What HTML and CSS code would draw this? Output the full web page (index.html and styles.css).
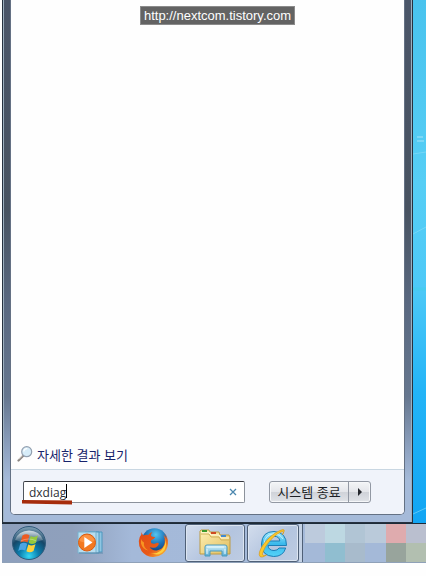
FILE: index.html
```html
<!DOCTYPE html>
<html lang="ko">

<head>
    <meta charset="UTF-8">
    <meta name="viewport" content="width=device-width, initial-scale=1.0">
    <title>시작 메뉴</title>
    <link rel="stylesheet" href="styles.css">
</head>

<body>
    <div class="screen">
        <div class="desktop">
            <div class="startMenu">
                <div class="menuPanel">
                    <div class="results">
                        <span class="siteLabel">http://nextcom.tistory.com</span>
                        <a class="moreResults" href="#">
                            <svg class="moreIcon" viewBox="0 0 16 16">
                                <path d="M6 10 1.5 14.5" stroke="#8a8581" stroke-width="2.2" stroke-linecap="round" />
                                <path d="M5.6 9.6 1.8 13.4" stroke="#d5cfc7" stroke-width="1" />
                                <circle cx="9.700" cy="5.700" r="5" fill="#d7edf9" stroke="#93a0b0" stroke-width="1.2" />
                                <path d="M6.8 5.5a3 3 0 0 1 3.5-2.8" fill="none" stroke="#fff" stroke-width="1.3" />
                            </svg>
                            자세한 결과 보기
                        </a>
                    </div>
                    <div class="menuFooter">
                        <div class="searchBox">
                            <input id="searchInput" class="searchInput" type="text" value="dxdiag" aria-label="검색">
                            <span class="caret"></span>
                            <button class="clearButton" aria-label="지우기">
                                <svg viewBox="0 0 8 8">
                                    <path d="M1 1 7 7M7 1 1 7" stroke="#4b87ae" stroke-width="1.3" />
                                </svg>
                            </button>
                            <svg class="underline" viewBox="0 0 52 6">
                                <path d="M1 1 51 1.500V5.500L1 4.500Z" fill="#a62c0c" />
                            </svg>
                        </div>
                        <div class="shutdown">
                            <button class="shutdownButton">시스템 종료</button>
                            <button class="shutdownArrow" aria-label="종료 옵션">
                                <svg viewBox="0 0 6 8">
                                    <path d="M1 0 5 4 1 8Z" fill="#24272d" />
                                </svg>
                            </button>
                        </div>
                    </div>
                </div>
            </div>
            <div class="wallpaper">
                <svg viewBox="0 0 13 523" preserveAspectRatio="none">
                    <path d="M4 137h6M4 141h7" stroke="#8adcf8" stroke-width="1.5" />
                    <path d="M0 154 13 152M0 234 13 227M0 514 13 508" stroke="#8adefa" stroke-width="1" opacity=".6" />
                    <path d="M0 289h13" stroke="#42cfe8" stroke-width="3" opacity=".5" />
                </svg>
            </div>
        </div>

        <div class="taskbar">
            <button class="taskItem startButton" aria-label="시작">
                <svg viewBox="0 0 36 36">
                    <defs>
                        <radialGradient id="orb" cx=".5" cy=".9" r=".85">
                            <stop offset="0" stop-color="#35d8f4" />
                            <stop offset=".35" stop-color="#0b7fae" />
                            <stop offset=".7" stop-color="#164667" />
                            <stop offset="1" stop-color="#7496ad" />
                        </radialGradient>
                        <linearGradient id="gloss" x2="0" y2="1">
                            <stop offset="0" stop-color="#fff" stop-opacity=".75" />
                            <stop offset="1" stop-color="#fff" stop-opacity=".12" />
                        </linearGradient>
                    </defs>
                    <circle cx="18" cy="18" r="16.5" fill="url(#orb)" stroke="#315b7c" />
                    <path d="M4 15a14.5 13 0 0 1 28 0Q18 20 4 15Z" fill="url(#gloss)" />
                    <path d="M11.5 10.5q3.5-2.5 7-.3l-2 7.2q-3.500-2-7 .2Z" fill="#ed5b22" />
                    <path d="M19.700 11q3.500 2 7.200-.4l-2 7.200q-3.700 2.400-7.200.2Z" fill="#96c93d" />
                    <path d="M9.200 19q3.500-2.200 7-.2l-2 6.800q-3.300-2-7 .3Z" fill="#4ba4e3" />
                    <path d="M17.300 19.500q3.500 2 7.200-.2l-2 6.800q-3.700 2.400-7.100.2Z" fill="#ffd13b" />
                    <path d="M9.500 16q8-4 16 0" fill="none" stroke="#fff" stroke-width="1" opacity=".3" />
                </svg>
            </button>
            <button class="taskItem mediaButton" aria-label="Windows Media Player">
                <svg viewBox="0 0 30 28">
                    <path d="M12 3h14v20H12Z" fill="#8fc6e2" stroke="#4d97be" />
                    <path d="M9 3h14v21H9Z" fill="#a8d6ec" stroke="#4d97be" />
                    <path d="M2 3h18v21H2Z" fill="#b7ddef" stroke="#76b1cd" />
                    <path d="M3 24h24" stroke="#5e8bad" />
                    <circle cx="11" cy="13.500" r="8.500" fill="#f37920" stroke="#da5b10" />
                    <path d="M3.500 12a7.600 7.600 0 0 1 15 0q-8 3-15 0Z" fill="#ff9c4e" opacity=".7" />
                    <path d="m8.300 8 8.200 5.500-8.200 5.500Z" fill="#fff" />
                </svg>
            </button>
            <button class="taskItem firefoxButton" aria-label="Firefox">
                <svg viewBox="0 0 32 32">
                    <defs>
                        <radialGradient id="globe" cx=".55" cy=".25" r=".8">
                            <stop offset="0" stop-color="#55c5ee" />
                            <stop offset=".45" stop-color="#1f78bd" />
                            <stop offset="1" stop-color="#12265f" />
                        </radialGradient>
                        <linearGradient id="fox" x1="0" x2="1" y2="1">
                            <stop offset="0" stop-color="#e04a16" />
                            <stop offset=".6" stop-color="#e95a17" />
                            <stop offset="1" stop-color="#ffd23c" />
                        </linearGradient>
                    </defs>
                    <circle cx="17.500" cy="14" r="12.800" fill="url(#globe)" />
                    <path d="M4.500 5q.5 2.500 2 3.400 2.300-1 4.700-.5 1.700-2.500 4.300-3-2 2-1.500 4.200 1.500 1.100 4.200 1-.7 2-4 3.200-.8 1.700.2 3 2.400 1 4.500-.1 1.700-1.100 3.100.5-1.300 3.600-5.200 4.100-2.800.2-4.200-.8 2.800 4.200 8 3.200 6.300-1.500 7.200-8 .5-4-1.300-7.500 2.500 2 3 4.500-.1-4.200-2.500-6.500 4.300 3.800 4 11-.6 6.500-5.500 10.200-4.400 3.300-10 3-7-.5-11-6-3-4.500-2.700-9.900.5-4.500 2.500-6.500Z" fill="url(#fox)" />
                    <path d="M4 12q1 3 3 3.500-1 5 4.500 8-6-1-7.500-7Z" fill="#f89422" />
                    <path d="M27.500 9q3 8-3.500 14.500-5 4-10.500 2.500 9 4 14-3 3-6 0-14Z" fill="#ffcf3d" />
                </svg>
            </button>
            <button class="taskItem windowButton explorerButton" aria-label="Windows 탐색기">
                <svg viewBox="0 0 34 30">
                    <defs>
                        <linearGradient id="folder" x2="1" y2="1">
                            <stop offset="0" stop-color="#fff1b5" />
                            <stop offset="1" stop-color="#e0bd5e" />
                        </linearGradient>
                        <linearGradient id="stand" x2="0" y2="1">
                            <stop offset="0" stop-color="#d5f2fb" />
                            <stop offset="1" stop-color="#5aadd4" />
                        </linearGradient>
                    </defs>
                    <path d="M3 2h8l1 2h9l1 3h9l1 2v17H2V3Z" fill="url(#folder)" stroke="#bd9b45" />
                    <path d="M3 5h8l2 2h8l2 3h8" fill="none" stroke="#fffbe0" />
                    <path d="M3 6h8l2 3h8l2 3h8" fill="none" stroke="#cfb05a" />
                    <path d="M4 2h5v2H4Z" fill="#3c982b" />
                    <path d="M13 4h5v2h-5Z" fill="#cf4921" />
                    <path d="M23 7h5v2h-5Z" fill="#438ad0" />
                    <path d="M7 28v-9q0-2 2-2h18q2 0 2 2v9h-5v-5H12v5Z" fill="url(#stand)" stroke="#4a9abd" />
                    <path d="M9 19h17M9 21v5M27 21v5" stroke="#e9fbff" stroke-width="1" />
                </svg>
            </button>
            <button class="taskItem windowButton ieButton" aria-label="Internet Explorer">
                <svg viewBox="0 0 34 32">
                    <defs>
                        <linearGradient id="ie" x2="0" y2="1">
                            <stop offset="0" stop-color="#a3eafb" />
                            <stop offset=".5" stop-color="#38b8ec" />
                            <stop offset="1" stop-color="#55d3f8" />
                        </linearGradient>
                    </defs>
                    <path d="M30.500 18.500H12q.5 5 6 5 3.500 0 5-2.500h6.700q-2.500 8.500-12 8.500Q5.500 29 5.500 17 6 4.500 18 4.500q12.500.5 12.500 14ZM12.200 14h11.600q-.4-4.700-5.700-4.700-5.200 0-5.900 4.700Z" fill="url(#ie)" stroke="#1b7db6" fill-rule="evenodd" />
                    <path d="M8 17q1-10 10-10 6 0 9 5" fill="none" stroke="#d7f8ff" stroke-width="1" opacity=".8" />
                    <path d="M26.500 7.500Q31 .5 24 3.500 14 8 7 18 1.500 26.500 4 29.500q2 1.500 6.500-1.500-4.500 1.500-4-1.500Q8 20 15 12.500 22 5.500 26.500 4.500q2 0 0 3Z" fill="#fbc72b" stroke="#d99a16" stroke-width=".7" />
                </svg>
            </button>
            <!-- stacked window edge and blurred items -->
            <div class="stackEdge"></div>
            <div class="mosaic">
                <span class="tile haze"></span>
                <span class="tile ice"></span>
                <span class="tile steel"></span>
                <span class="tile mist"></span>
                <span class="tile rose"></span>
                <span class="tile lilac"></span>
                <span class="tile blue"></span>
                <span class="tile teal"></span>
                <span class="tile slate"></span>
                <span class="tile blue"></span>
                <span class="tile moss"></span>
                <span class="tile sage"></span>
            </div>
        </div>
    </div>
</body>

</html>
```

FILE: styles.css
```css
* {
    margin: 0;
    padding: 0;
    box-sizing: border-box;
}

body {
    min-height: 100vh;
    padding: 0 0 13px 2px;
    background-color: #fefefe;
    font-family: "Open Sans", "Noto Sans CJK KR", sans-serif;
    font-size: 13px;
}

svg {
    display: block;
}

button {
    border: none;
    background: none;
    font: inherit;
    cursor: pointer;
}

.screen {
    min-height: calc(100vh - 13px);
    display: flex;
    flex-direction: column;
}

.desktop {
    flex: 1;
    display: flex;
}

.startMenu {
    flex: 1;
    display: flex;
    padding: 0 7px 7px;
    border: 1px solid #26313f;
    border-top: none;
    box-shadow: inset 1px 0 #9db0bf, inset -1px 0 #9db0bf;
    background: linear-gradient(#4b5669, #485361 40%, #596880 58%, #66778f 76%, #8ea2c0 86%, #a5bad9 92%);
}

.menuPanel {
    flex: 1;
    display: flex;
    flex-direction: column;
    border: 1px solid #647184;
    border-top: none;
    border-radius: 0 0 5px 5px;
    background-color: #fefefe;
    overflow: hidden;
}

.results {
    flex: 1;
    display: flex;
    flex-direction: column;
    justify-content: space-between;
    padding: 6px 6px;
}

.siteLabel {
    align-self: center;
    height: 19px;
    margin-left: 20px;
    padding: 0 3px;
    border: 1px solid #8b8b8b;
    background-color: #636363;
    color: #fff;
    font-family: "Liberation Sans", sans-serif;
    font-size: 13px;
    line-height: 17px;
}

.moreResults {
    display: flex;
    align-items: center;
    gap: 4px;
    height: 18px;
    color: #17236b;
    font-family: "Noto Sans CJK KR", sans-serif;
    text-decoration: none;
}

.moreIcon {
    width: 16px;
    height: 16px;
}

.menuFooter {
    display: flex;
    align-items: center;
    gap: 24px;
    height: 45px;
    padding: 0 33px 0 12px;
    border-top: 1px solid #c9d7e2;
    background-color: #f0f3fa;
}

.searchBox {
    position: relative;
    flex: 1;
    height: 22px;
}

.searchInput {
    width: 100%;
    height: 100%;
    padding: 0 24px 0 5px;
    border: 1px solid #8c929b;
    border-top-color: #34373d;
    border-left-color: #50555d;
    border-radius: 2px;
    outline: none;
    background-color: #fff;
    color: #2b2f36;
    font-family: "Open Sans", sans-serif;
    font-size: 12px;
}

.caret {
    position: absolute;
    left: 43px;
    top: 3px;
    width: 1px;
    height: 14px;
    background-color: #000;
}

.clearButton {
    position: absolute;
    right: 8px;
    top: 7px;
    width: 8px;
    height: 8px;
}

/* marker stroke under the typed word */
.underline {
    position: absolute;
    left: -2px;
    top: 18px;
    width: 52px;
    height: 6px;
}

.shutdown {
    display: flex;
    height: 22px;
    border: 1px solid #9298a3;
    border-radius: 3px;
    background: linear-gradient(#f4f5f7, #e4e6ea 48%, #d0d3d9 52%, #e0e3e8);
    box-shadow: inset 0 0 0 1px #f6f7f9;
}

.shutdownButton {
    width: 78px;
    color: #1c1f26;
    font-family: "Noto Sans CJK KR", sans-serif;
    line-height: 20px;
}

.shutdownArrow {
    display: flex;
    align-items: center;
    justify-content: center;
    width: 22px;
    border-left: 1px solid #9298a3;
}

.shutdownArrow svg {
    width: 6px;
    height: 8px;
}

.wallpaper {
    width: 13px;
    background: linear-gradient(#49c3ee, #56cef5 35%, #4dc9f7 55%, #23b4f7 75%, #12a5f3);
}

.wallpaper svg {
    width: 100%;
    height: 100%;
}

.taskbar {
    display: flex;
    height: 40px;
    border-top: 1px solid #1d2b38;
    border-bottom: 1px solid #8fa1b8;
    background: linear-gradient(90deg, #8d9fbc, #8fa0bc 70px, #a4b9d9 130px, #a6bbda);
}

.taskItem {
    display: flex;
    align-items: center;
    justify-content: center;
}

.startButton {
    width: 54px;
}

.startButton svg {
    width: 36px;
    height: 36px;
}

.mediaButton {
    width: 70px;
}

.mediaButton svg {
    width: 30px;
    height: 28px;
}

.firefoxButton {
    width: 54px;
    margin-right: 5px;
}

.firefoxButton svg {
    width: 32px;
    height: 32px;
}

.windowButton {
    margin-right: 2px;
    border: 1px solid #4f6077;
    border-radius: 3px;
    background: linear-gradient(135deg, #d3dded, #b4c5df 55%, #becce2);
    box-shadow: inset 0 0 0 1px #dce5f1;
}

.explorerButton {
    width: 60px;
}

.explorerButton svg {
    width: 34px;
    height: 30px;
}

.ieButton {
    width: 52px;
    margin-right: 0;
}

.ieButton svg {
    width: 34px;
    height: 32px;
}

.stackEdge {
    width: 4px;
    margin-right: 2px;
    border-right: 1px solid #4f6077;
    background-color: #c4d2e5;
}

.mosaic {
    flex: 1;
    display: grid;
    grid-template-columns: repeat(6, 1fr);
    grid-template-rows: repeat(2, 1fr);
}

.haze {
    background-color: #bdcbdd;
}

.ice {
    background-color: #bdd8e2;
}

.steel {
    background-color: #b1c5d5;
}

.mist {
    background-color: #bacada;
}

.rose {
    background-color: #dfabae;
}

.lilac {
    background-color: #babfcf;
}

.blue {
    background-color: #a4b9d8;
}

.teal {
    background-color: #90bed0;
}

.slate {
    background-color: #a8bbcc;
}

.moss {
    background-color: #98a49c;
}

.sage {
    background-color: #b2bfb0;
}
```
